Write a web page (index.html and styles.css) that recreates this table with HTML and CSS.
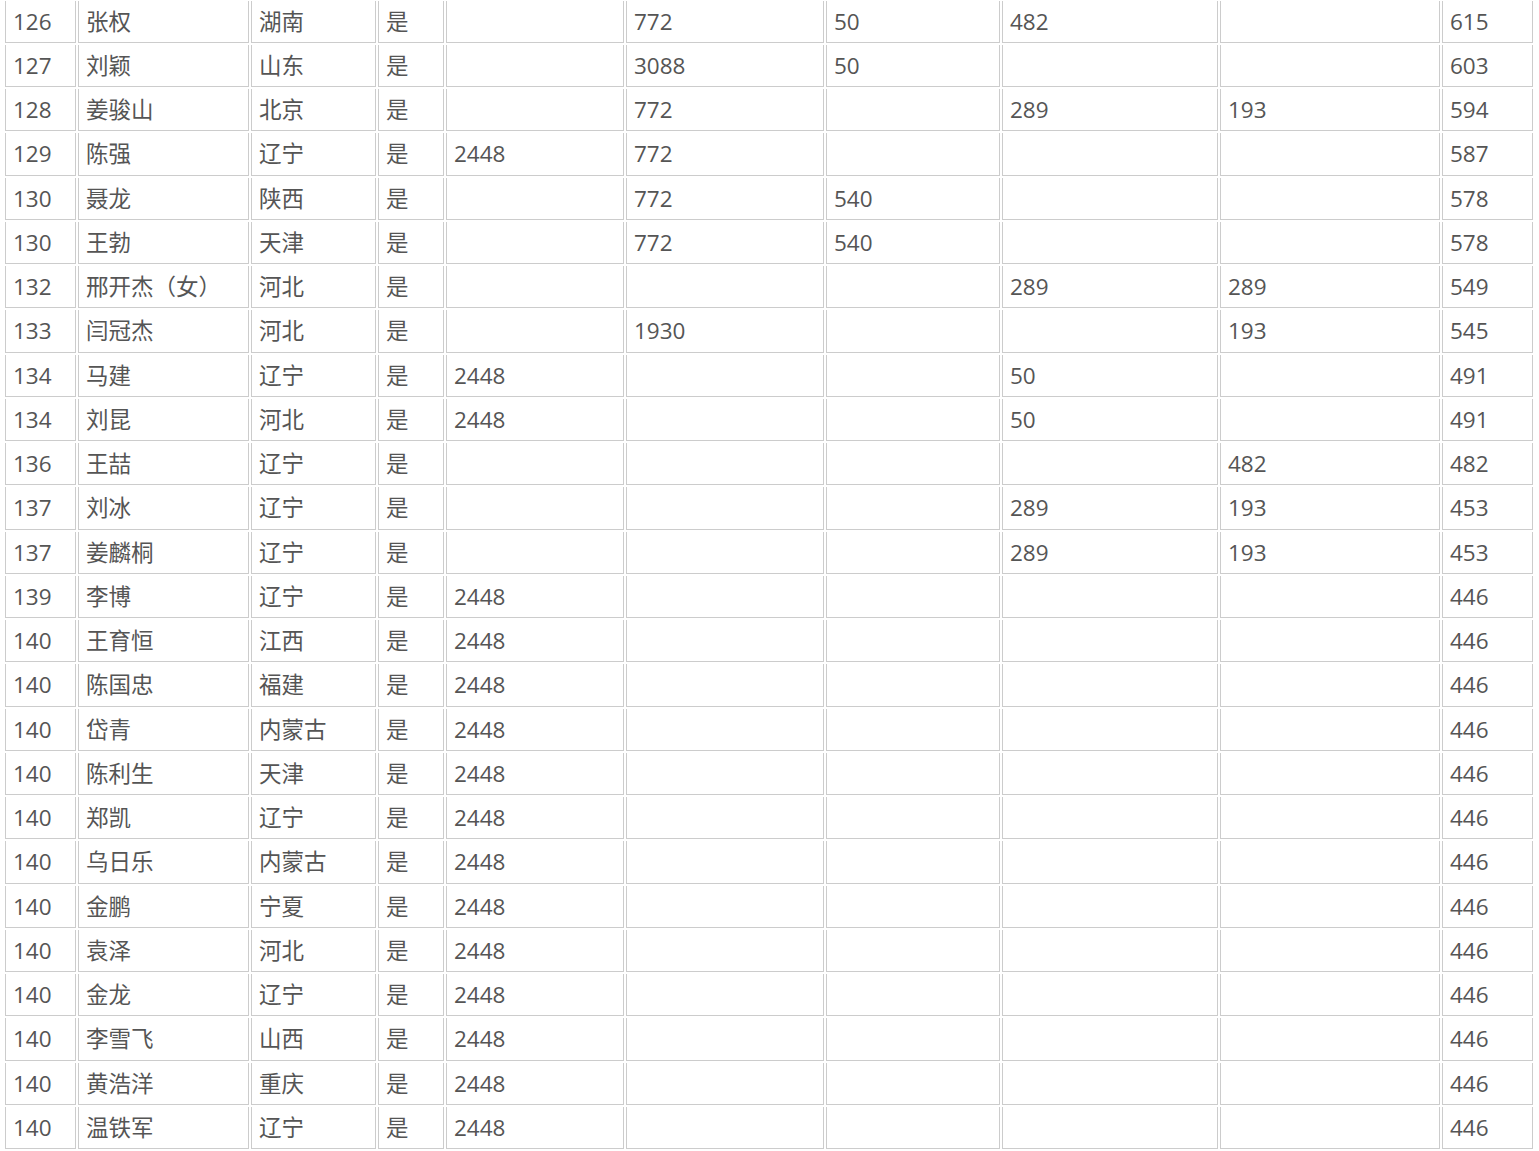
FILE: index.html
```html
<!DOCTYPE html>
<html lang="zh-CN">
<head>
<meta charset="utf-8">
<title>排名表</title>
<link rel="stylesheet" href="styles.css">
</head>
<body>
<table class="rank">
<colgroup>
<col class="c1"><col class="c2"><col class="c3"><col class="c4"><col class="c5"><col class="c6"><col class="c7"><col class="c8"><col class="c9"><col class="c10">
</colgroup>
<tbody>
<tr><td>126</td><td>张权</td><td>湖南</td><td>是</td><td></td><td>772</td><td>50</td><td>482</td><td></td><td>615</td></tr>
<tr><td>127</td><td>刘颖</td><td>山东</td><td>是</td><td></td><td>3088</td><td>50</td><td></td><td></td><td>603</td></tr>
<tr><td>128</td><td>姜骏山</td><td>北京</td><td>是</td><td></td><td>772</td><td></td><td>289</td><td>193</td><td>594</td></tr>
<tr><td>129</td><td>陈强</td><td>辽宁</td><td>是</td><td>2448</td><td>772</td><td></td><td></td><td></td><td>587</td></tr>
<tr><td>130</td><td>聂龙</td><td>陕西</td><td>是</td><td></td><td>772</td><td>540</td><td></td><td></td><td>578</td></tr>
<tr><td>130</td><td>王勃</td><td>天津</td><td>是</td><td></td><td>772</td><td>540</td><td></td><td></td><td>578</td></tr>
<tr><td>132</td><td>邢开杰（女）</td><td>河北</td><td>是</td><td></td><td></td><td></td><td>289</td><td>289</td><td>549</td></tr>
<tr><td>133</td><td>闫冠杰</td><td>河北</td><td>是</td><td></td><td>1930</td><td></td><td></td><td>193</td><td>545</td></tr>
<tr><td>134</td><td>马建</td><td>辽宁</td><td>是</td><td>2448</td><td></td><td></td><td>50</td><td></td><td>491</td></tr>
<tr><td>134</td><td>刘昆</td><td>河北</td><td>是</td><td>2448</td><td></td><td></td><td>50</td><td></td><td>491</td></tr>
<tr><td>136</td><td>王喆</td><td>辽宁</td><td>是</td><td></td><td></td><td></td><td></td><td>482</td><td>482</td></tr>
<tr><td>137</td><td>刘冰</td><td>辽宁</td><td>是</td><td></td><td></td><td></td><td>289</td><td>193</td><td>453</td></tr>
<tr><td>137</td><td>姜麟桐</td><td>辽宁</td><td>是</td><td></td><td></td><td></td><td>289</td><td>193</td><td>453</td></tr>
<tr><td>139</td><td>李博</td><td>辽宁</td><td>是</td><td>2448</td><td></td><td></td><td></td><td></td><td>446</td></tr>
<tr><td>140</td><td>王育恒</td><td>江西</td><td>是</td><td>2448</td><td></td><td></td><td></td><td></td><td>446</td></tr>
<tr><td>140</td><td>陈国忠</td><td>福建</td><td>是</td><td>2448</td><td></td><td></td><td></td><td></td><td>446</td></tr>
<tr><td>140</td><td>岱青</td><td>内蒙古</td><td>是</td><td>2448</td><td></td><td></td><td></td><td></td><td>446</td></tr>
<tr><td>140</td><td>陈利生</td><td>天津</td><td>是</td><td>2448</td><td></td><td></td><td></td><td></td><td>446</td></tr>
<tr><td>140</td><td>郑凯</td><td>辽宁</td><td>是</td><td>2448</td><td></td><td></td><td></td><td></td><td>446</td></tr>
<tr><td>140</td><td>乌日乐</td><td>内蒙古</td><td>是</td><td>2448</td><td></td><td></td><td></td><td></td><td>446</td></tr>
<tr><td>140</td><td>金鹏</td><td>宁夏</td><td>是</td><td>2448</td><td></td><td></td><td></td><td></td><td>446</td></tr>
<tr><td>140</td><td>袁泽</td><td>河北</td><td>是</td><td>2448</td><td></td><td></td><td></td><td></td><td>446</td></tr>
<tr><td>140</td><td>金龙</td><td>辽宁</td><td>是</td><td>2448</td><td></td><td></td><td></td><td></td><td>446</td></tr>
<tr><td>140</td><td>李雪飞</td><td>山西</td><td>是</td><td>2448</td><td></td><td></td><td></td><td></td><td>446</td></tr>
<tr><td>140</td><td>黄浩洋</td><td>重庆</td><td>是</td><td>2448</td><td></td><td></td><td></td><td></td><td>446</td></tr>
<tr><td>140</td><td>温铁军</td><td>辽宁</td><td>是</td><td>2448</td><td></td><td></td><td></td><td></td><td>446</td></tr>
</tbody>
</table>
</body>
</html>
```
FILE: styles.css
```css
html, body {
  margin: 0;
  padding: 0;
  background: #ffffff;
  overflow: hidden;
}

.rank {
  margin: -1.5px 0 0 3px;
  table-layout: fixed;
  width: 1532px;
  border-collapse: separate;
  border-spacing: 2px;
  font-family: "Open Sans", "Noto Sans CJK SC", sans-serif;
  font-size: 22.5px;
  color: #555555;
}

.rank td {
  box-sizing: border-box;
  padding: 0 0 0 7px;
  height: 42.25px;
  line-height: 41.25px;
  border: 1px solid #cccccc;
  border-top: none;
  white-space: nowrap;
  overflow: hidden;
  vertical-align: middle;
  text-align: left;
}

.c1 { width: 71px; }
.c2 { width: 171px; }
.c3 { width: 125px; }
.c4 { width: 66px; }
.c5 { width: 178px; }
.c6 { width: 198px; }
.c7 { width: 174px; }
.c8 { width: 216px; }
.c9 { width: 220px; }
.c10 { width: 91px; }
```
